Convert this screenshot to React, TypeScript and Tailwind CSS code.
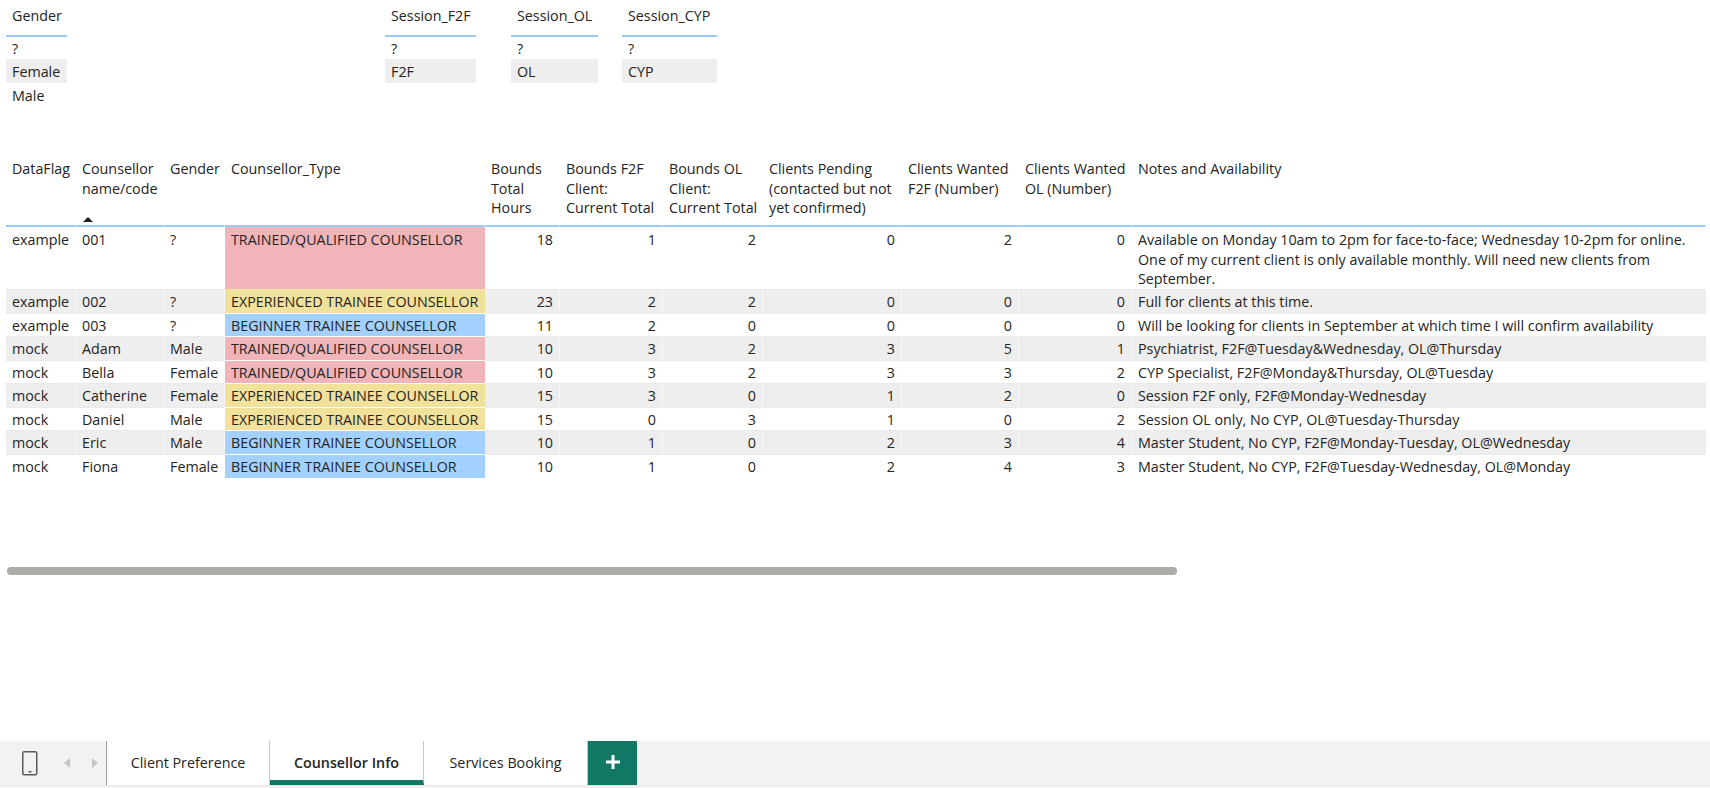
const columns = "grid grid-cols-[70px_88px_61px_260px_75px_103px_100px_139px_117px_113px_574px]";

const pink = "bg-[#f0b4b9]";
const yellow = "bg-[#f0e19b]";
const blue = "bg-[#a3d1ff]";

const headers = [
  ["DataFlag"],
  ["Counsellor", "name/code"],
  ["Gender"],
  ["Counsellor_Type"],
  ["Bounds", "Total", "Hours"],
  ["Bounds F2F", "Client:", "Current Total"],
  ["Bounds OL", "Client:", "Current Total"],
  ["Clients Pending", "(contacted but not", "yet confirmed)"],
  ["Clients Wanted", "F2F (Number)"],
  ["Clients Wanted", "OL (Number)"],
  ["Notes and Availability"],
];

const rows = [
  { h: "h-[62px]", flag: "example", name: "001", gender: "?", type: "TRAINED/QUALIFIED COUNSELLOR", color: pink, nums: [18, 1, 2, 0, 2, 0], notes: "Available on Monday 10am to 2pm for face-to-face; Wednesday 10-2pm for online. One of my current client is only available monthly. Will need new clients from September." },
  { h: "h-[25px]", flag: "example", name: "002", gender: "?", type: "EXPERIENCED TRAINEE COUNSELLOR", color: yellow, nums: [23, 2, 2, 0, 0, 0], notes: "Full for clients at this time." },
  { h: "h-[23px]", flag: "example", name: "003", gender: "?", type: "BEGINNER TRAINEE COUNSELLOR", color: blue, nums: [11, 2, 0, 0, 0, 0], notes: "Will be looking for clients in September at which time I will confirm availability" },
  { h: "h-[24px]", flag: "mock", name: "Adam", gender: "Male", type: "TRAINED/QUALIFIED COUNSELLOR", color: pink, nums: [10, 3, 2, 3, 5, 1], notes: "Psychiatrist, F2F@Tuesday&Wednesday, OL@Thursday" },
  { h: "h-[23px]", flag: "mock", name: "Bella", gender: "Female", type: "TRAINED/QUALIFIED COUNSELLOR", color: pink, nums: [10, 3, 2, 3, 3, 2], notes: "CYP Specialist, F2F@Monday&Thursday, OL@Tuesday" },
  { h: "h-[24px]", flag: "mock", name: "Catherine", gender: "Female", type: "EXPERIENCED TRAINEE COUNSELLOR", color: yellow, nums: [15, 3, 0, 1, 2, 0], notes: "Session F2F only, F2F@Monday-Wednesday" },
  { h: "h-[23px]", flag: "mock", name: "Daniel", gender: "Male", type: "EXPERIENCED TRAINEE COUNSELLOR", color: yellow, nums: [15, 0, 3, 1, 0, 2], notes: "Session OL only, No CYP, OL@Tuesday-Thursday" },
  { h: "h-[24px]", flag: "mock", name: "Eric", gender: "Male", type: "BEGINNER TRAINEE COUNSELLOR", color: blue, nums: [10, 1, 0, 2, 3, 4], notes: "Master Student, No CYP, F2F@Monday-Tuesday, OL@Wednesday" },
  { h: "h-[24px]", flag: "mock", name: "Fiona", gender: "Female", type: "BEGINNER TRAINEE COUNSELLOR", color: blue, nums: [10, 1, 0, 2, 4, 3], notes: "Master Student, No CYP, F2F@Tuesday-Wednesday, OL@Monday" },
];

function Slicer({ title, items, width }: { title: string; items: string[]; width: string }) {
  return (
    <div className={width}>
      <div className="h-[37px] border-b-2 border-[#9ccbf7] pl-[6px] pt-[6px]">{title}</div>
      {items.map((item, i) => (
        <div
          key={item}
          className={`flex items-center pl-[6px] pt-[1px] ${i === 0 ? "h-[22px]" : "h-[24px]"} ${i === 1 ? "bg-[#eeeeee]" : ""}`}
        >
          {item}
        </div>
      ))}
    </div>
  );
}

function Row({ row, index }: { row: (typeof rows)[number]; index: number }) {
  const bg = index % 2 === 1 ? "bg-[#eeeeee]" : "bg-white";
  const align = index === 0 ? "items-start pt-[3px]" : "items-center pt-[1px]";
  const bottom = index === rows.length - 1 ? "border-b-transparent" : "border-b-[#e9e9e9]";
  const cell = `flex px-[6px] border-b border-r border-r-white/60 ${bottom} ${align}`;
  return (
    <div className={`${columns} ${row.h} ${bg}`}>
      <div className={cell}>{row.flag}</div>
      <div className={cell}>{row.name}</div>
      <div className={cell}>{row.gender}</div>
      <div className={`flex px-[6px] border-b border-white whitespace-nowrap ${align} ${row.color}`}>{row.type}</div>
      {row.nums.map((n, i) => (
        <div key={i} className={`${cell} justify-end`}>
          {n}
        </div>
      ))}
      <div className={`${cell} border-r-0`}>
        <span className="w-full">{row.notes}</span>
      </div>
    </div>
  );
}

function Tab({ label, width, active }: { label: string; width: string; active?: boolean }) {
  return (
    <div
      className={`flex items-center justify-center border-r border-[#c8c6c4] bg-white ${width} ${
        active ? "border-b-[5px] border-b-[#117865] pt-[4px] font-semibold" : ""
      }`}
    >
      {label}
    </div>
  );
}

export default function App() {
  return (
    <div className="flex h-[788px] w-[1710px] flex-col overflow-hidden bg-white text-[14.3px] leading-[19.5px] text-[#252423] [font-family:'Open_Sans','Liberation_Sans',sans-serif]">
      <div className="flex pl-[6px]">
        <Slicer title="Gender" items={["?", "Female", "Male"]} width="w-[61px]" />
        <div className="ml-[318px]">
          <Slicer title="Session_F2F" items={["?", "F2F"]} width="w-[91px]" />
        </div>
        <div className="ml-[35px]">
          <Slicer title="Session_OL" items={["?", "OL"]} width="w-[87px]" />
        </div>
        <div className="ml-[24px]">
          <Slicer title="Session_CYP" items={["?", "CYP"]} width="w-[95px]" />
        </div>
      </div>

      <div className="ml-[6px] mt-[51px] w-[1700px]">
        <div className={`${columns} h-[69px]`}>
          {headers.map((lines, i) => (
            <div
              key={lines.join(" ")}
              className="flex flex-col whitespace-nowrap border-b-2 border-r border-b-[#9ccbf7] border-r-white px-[6px] pt-[1px]"
            >
              {lines.map((line) => (
                <span key={line}>{line}</span>
              ))}
              {i === 1 && (
                <svg viewBox="0 0 10 5" className="mb-[3px] ml-px mt-auto h-[5px] w-[10px]">
                  <path d="M5 0 10 5H0Z" fill="#201f1e" />
                </svg>
              )}
            </div>
          ))}
        </div>
        {rows.map((row, i) => (
          <Row key={row.name} row={row} index={i} />
        ))}
      </div>

      <div className="ml-[7px] mt-[88px] h-[8px] w-[1170px] rounded-full bg-[#aeaca9]" />

      <div className="mt-auto flex h-[44px] bg-[#f3f2f1]">
        <div className="flex w-[107px] items-center border-r border-[#a19f9d]">
          <svg viewBox="0 0 16 25" className="ml-[22px] h-[25px] w-[16px]">
            <rect x="0.75" y="0.75" width="14" height="23" rx="1.5" fill="none" stroke="#5b5a58" strokeWidth="1.5" />
            <rect x="6.5" y="20" width="3" height="1.5" fill="#5b5a58" />
          </svg>
          <svg viewBox="0 0 6 10" className="ml-[26px] h-[10px] w-[6px]">
            <path d="M6 0V10L0 5Z" fill="#c8c6c4" />
          </svg>
          <svg viewBox="0 0 6 10" className="ml-[22px] h-[10px] w-[6px]">
            <path d="M0 0V10L6 5Z" fill="#c8c6c4" />
          </svg>
        </div>
        <Tab label="Client Preference" width="w-[163px]" />
        <Tab label="Counsellor Info" width="w-[154px]" active />
        <Tab label="Services Booking" width="w-[164px]" />
        <div className="flex w-[49px] items-center justify-center bg-[#117865]">
          <svg viewBox="0 0 14 14" className="mb-[3px] h-[14px] w-[14px]">
            <path d="M5.5 0h3v5.5H14v3H8.5V14h-3V8.5H0v-3h5.5Z" fill="#ffffff" />
          </svg>
        </div>
      </div>
      <div className="h-[3px] border-t border-[#e6e6e6] bg-[#f3f2f1]" />
    </div>
  );
}
